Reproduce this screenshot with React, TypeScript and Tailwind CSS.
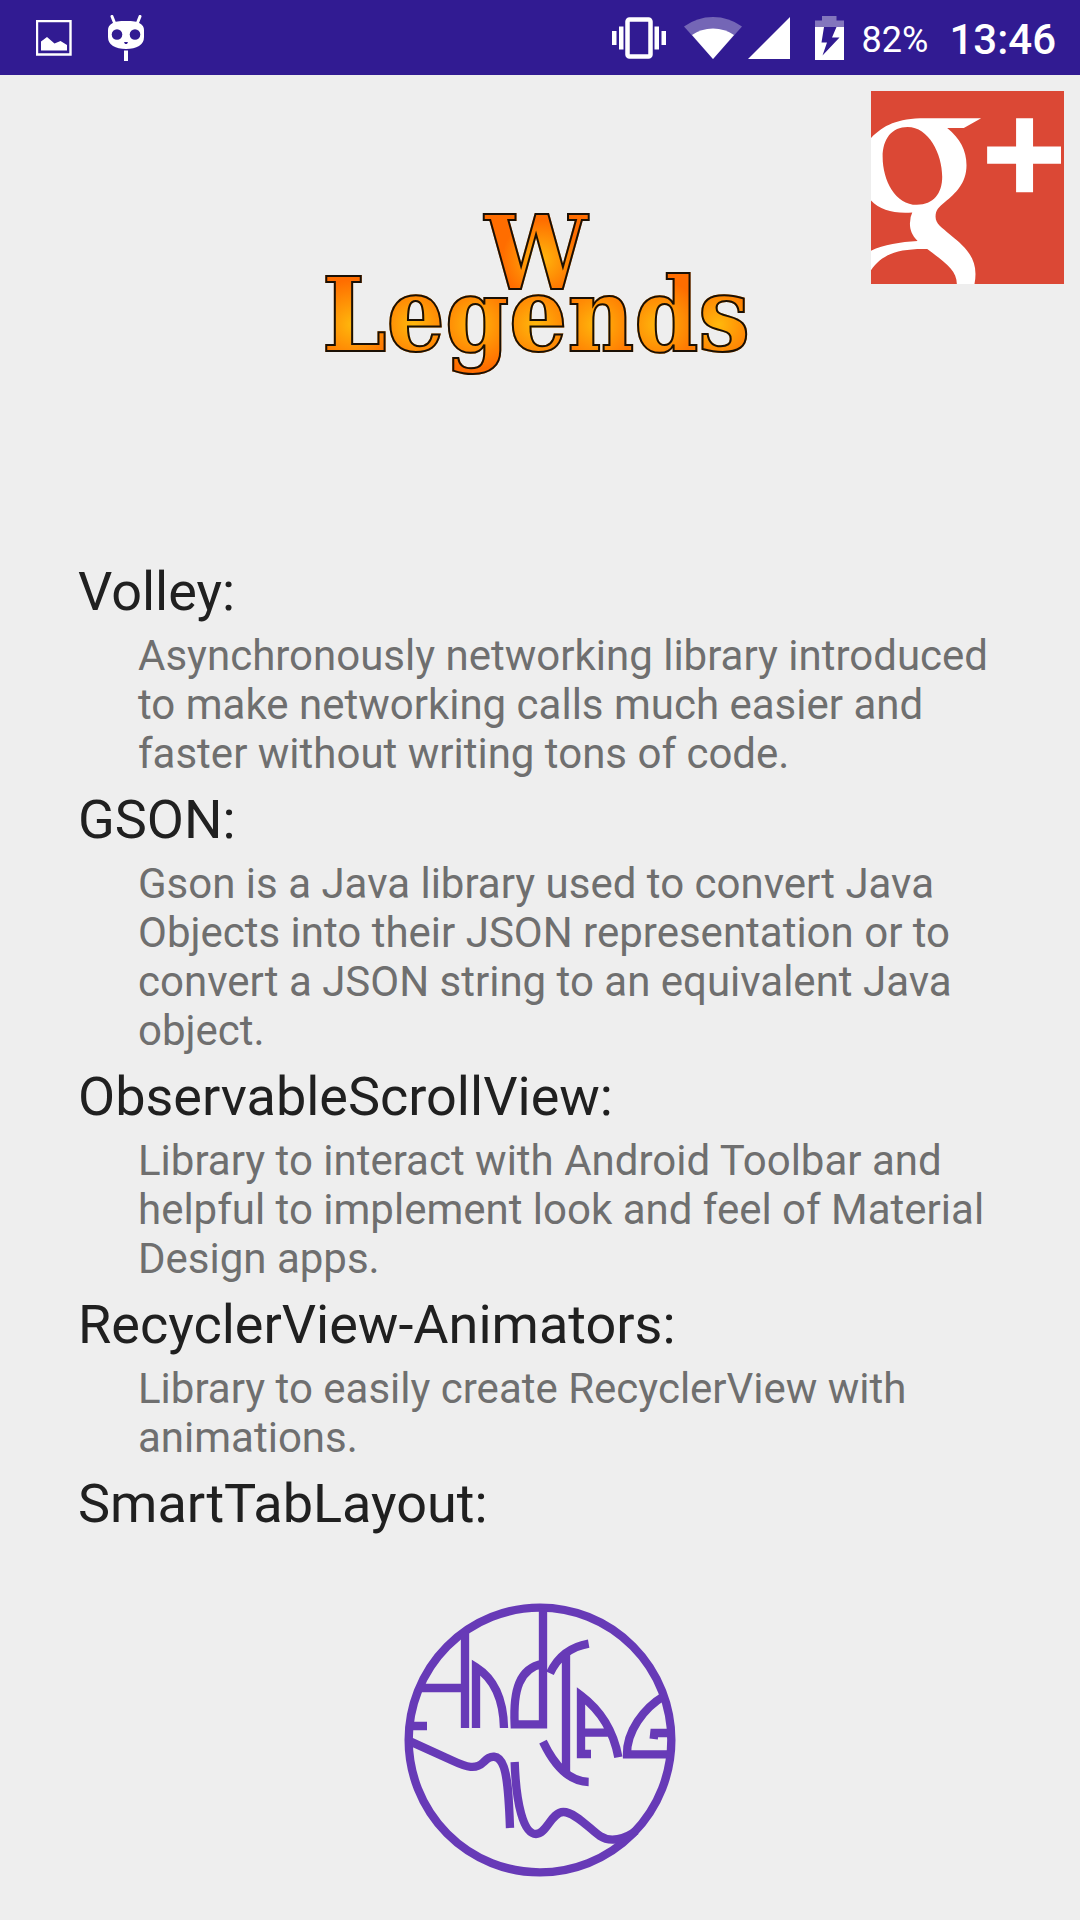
type Library = { name: string; description?: string };

const libraries: Library[] = [
  {
    name: 'Volley:',
    description:
      'Asynchronously networking library introduced to make networking calls much easier and faster without writing tons of code.',
  },
  {
    name: 'GSON:',
    description:
      'Gson is a Java library used to convert Java Objects into their JSON representation or to convert a JSON string to an equivalent Java object.',
  },
  {
    name: 'ObservableScrollView:',
    description:
      'Library to interact with Android Toolbar and helpful to implement look and feel of Material Design apps.',
  },
  {
    name: 'RecyclerView-Animators:',
    description: 'Library to easily create RecyclerView with animations.',
  },
  { name: 'SmartTabLayout:' },
];

function PictureIcon() {
  return (
    <svg viewBox="0 0 36 36" className="size-9" aria-hidden="true">
      <path d="M1 1H34.500V34.500H1Z" fill="none" stroke="#fff" strokeWidth="2.400" />
      <path d="M5 21.500L11 17L18.500 23.500L24.500 21L31 25V30.500H5Z" fill="#fff" />
    </svg>
  );
}

function CidIcon() {
  return (
    <svg viewBox="0 0 36 46" className="h-[46px] w-9" aria-hidden="true">
      <path d="M4 1.500L7 9M32 1.500L29 9" stroke="#fff" strokeWidth="3" strokeLinecap="round" />
      <path d="M18 6C25 6 29 6.500 32 8.500Q36 10.500 36 15V22Q36 28 31 31Q26 34 18 34Q10 34 5 31Q0 28 0 22V15Q0 10.500 4 8.500C7 6.500 11 6 18 6Z" fill="#fff" />
      <circle cx="9" cy="19.500" r="5.300" fill="#311b92" />
      <circle cx="27" cy="19.500" r="5.300" fill="#311b92" />
      <path d="M16 27H20L19 29H17Z" fill="#311b92" />
      <path d="M16 35.500H20V46H16Z" fill="#fff" />
    </svg>
  );
}

function VibrateIcon() {
  return (
    <svg viewBox="0 0 54 42" className="h-[42px] w-[54px]" fill="#fff" aria-hidden="true">
      <rect x="15.500" y="2.500" width="23" height="37" rx="2" fill="none" stroke="#fff" strokeWidth="4.500" />
      <path d="M0 14H4.500V28H0ZM7 9.500H11.500V32.500H7ZM42.500 9.500H47V32.500H42.500ZM49.500 14H54V28H49.500Z" />
    </svg>
  );
}

function WifiIcon() {
  return (
    <svg viewBox="0 0 58 42" className="h-[42px] w-[58px]" fill="#fff" aria-hidden="true">
      <path d="M0 9.500Q13 0 29 0T58 9.500L29 42Z" opacity="0.330" />
      <path d="M8 18Q17 11.500 29 11.500T50 18L29 42Z" />
    </svg>
  );
}

function SignalIcon() {
  return (
    <svg viewBox="0 0 42 42" className="size-[42px]" fill="#fff" aria-hidden="true">
      <path d="M42 0V42H0Z" />
    </svg>
  );
}

function BatteryIcon() {
  return (
    <svg viewBox="0 0 29 44" className="h-11 w-[29px]" fill="#fff" aria-hidden="true">
      <path d="M7 0H21.500V4.500H29V11H0V4.500H7Z" opacity="0.400" />
      <path d="M0 11H29V44H0Z" />
      <path d="M9 11H21.500L17 21.500H24.500L7.500 39.500L12 26.500H6.500Z" fill="#311b92" />
    </svg>
  );
}

function StatusBar() {
  return (
    <div className="flex h-[75px] shrink-0 items-center justify-between bg-[#311b92] pr-6 pl-9 text-white">
      <div className="flex items-center gap-9">
        <PictureIcon />
        <CidIcon />
      </div>
      <div className="flex items-center">
        <VibrateIcon />
        <div className="ml-[18px] flex items-center gap-1.5">
          <WifiIcon />
          <SignalIcon />
        </div>
        <div className="ml-[25px]">
          <BatteryIcon />
        </div>
        <span className="ml-[18px] pt-1 text-4xl">82%</span>
        <span className="ml-[21px] pt-1 text-[42px] leading-none font-medium">13:46</span>
      </div>
    </div>
  );
}

function GooglePlusMark() {
  return (
    <svg viewBox="62 62 580 580" className="size-[193px]" fill="#fff" aria-hidden="true">
      <path d="M62 62H642V642H62Z" fill="#db4835" />
      <path
        fillRule="evenodd"
        d="M62 203C100 165 140 144 225 144H393L341 173H291C330 205 349 240 349 285C349 340 315 370 285 395C265 412 256 420 256 440C256 462 275 472 300 494C345 530 376 560 376 612Q376 628 373 642H320C320 600 285 578 231 537C150 535 95 550 62 601V542C100 524 150 516 202 513C185 494 179 480 179 460Q179 440 186 427C130 431 90 420 62 391ZM172 170C125 170 97 205 97 260C97 330 135 404 200 404C250 404 276 370 276 320C276 250 235 170 172 170Z"
      />
      <path d="M498 144h51v85h84v52h-84v85h-51v-85h-87v-52h87z" />
    </svg>
  );
}

function AuthorMark() {
  return (
    <svg
      viewBox="42 39 816 822"
      className="h-[274px] w-[272px]"
      fill="none"
      stroke="#673ab7"
      strokeWidth="25"
      role="img"
      aria-label="AndJAG"
    >
      <ellipse cx="450" cy="450" rx="394" ry="397" />
      <path d="M225 414V125M88 294H225M60 408H111" />
      <path d="M258 414V232C310 265 340 325 342 414" />
      <path d="M459 55V403H374C369 300 388 235 459 221" />
      <path d="M480 250C503 200 545 170 596 161M528 185V550M459 455C490 520 535 575 596 576" />
      <path d="M603 492H573V317C630 360 670 420 685 502M573 428H660" />
      <path d="M822 318C760 355 710 425 711 493H840M791 447L793 429H840" />
      <path d="M62 455L190 513C230 532 258 539 280 517C300 495 326 490 341 530C354 565 357 630 360 714" />
      <path d="M374 516C378 640 400 732 438 732C470 732 484 666 520 666C556 666 600 718 630 738C660 758 705 748 738 722" />
    </svg>
  );
}

function Wordmark() {
  return (
    <h1 className="pt-[147px] pr-2 text-center font-['DejaVu_Serif_Condensed','DejaVu_Serif',serif] text-[102px] leading-[62px] font-bold text-transparent [-webkit-text-stroke:2px_#1a1005]">
      <span className="block">
        <span className="bg-[radial-gradient(circle_at_55%_55%,#ffb80c,#ff6d00_45%)] bg-clip-text">W</span>
      </span>
      <span className="block">
        <span className="bg-[radial-gradient(circle_at_50%_58%,#ffb80c,#ff6d00_45px)] bg-[length:61px_100%] bg-clip-text">
          Legends
        </span>
      </span>
    </h1>
  );
}

export default function App() {
  return (
    <div className="flex min-h-screen flex-col bg-[#eeeeee] font-[Roboto,sans-serif]">
      <StatusBar />
      <header className="grid h-[485px] grid-cols-[1fr_auto_1fr] items-start">
        <div />
        <Wordmark />
        <button type="button" aria-label="Google+" className="m-4 cursor-pointer justify-self-end">
          <GooglePlusMark />
        </button>
      </header>
      <main className="px-[78px]">
        <dl>
          {libraries.map((library) => (
            <div key={library.name}>
              <dt className="text-[54px] leading-[63px] text-[#202020]">{library.name}</dt>
              {library.description && (
                <dd className="pt-2 pb-2.5 pl-[60px] text-[42px] leading-[49px] text-[#6f6f6f]">
                  {library.description}
                </dd>
              )}
            </div>
          ))}
        </dl>
      </main>
      <footer className="mt-auto flex justify-center pb-[43px]">
        <AuthorMark />
      </footer>
    </div>
  );
}
